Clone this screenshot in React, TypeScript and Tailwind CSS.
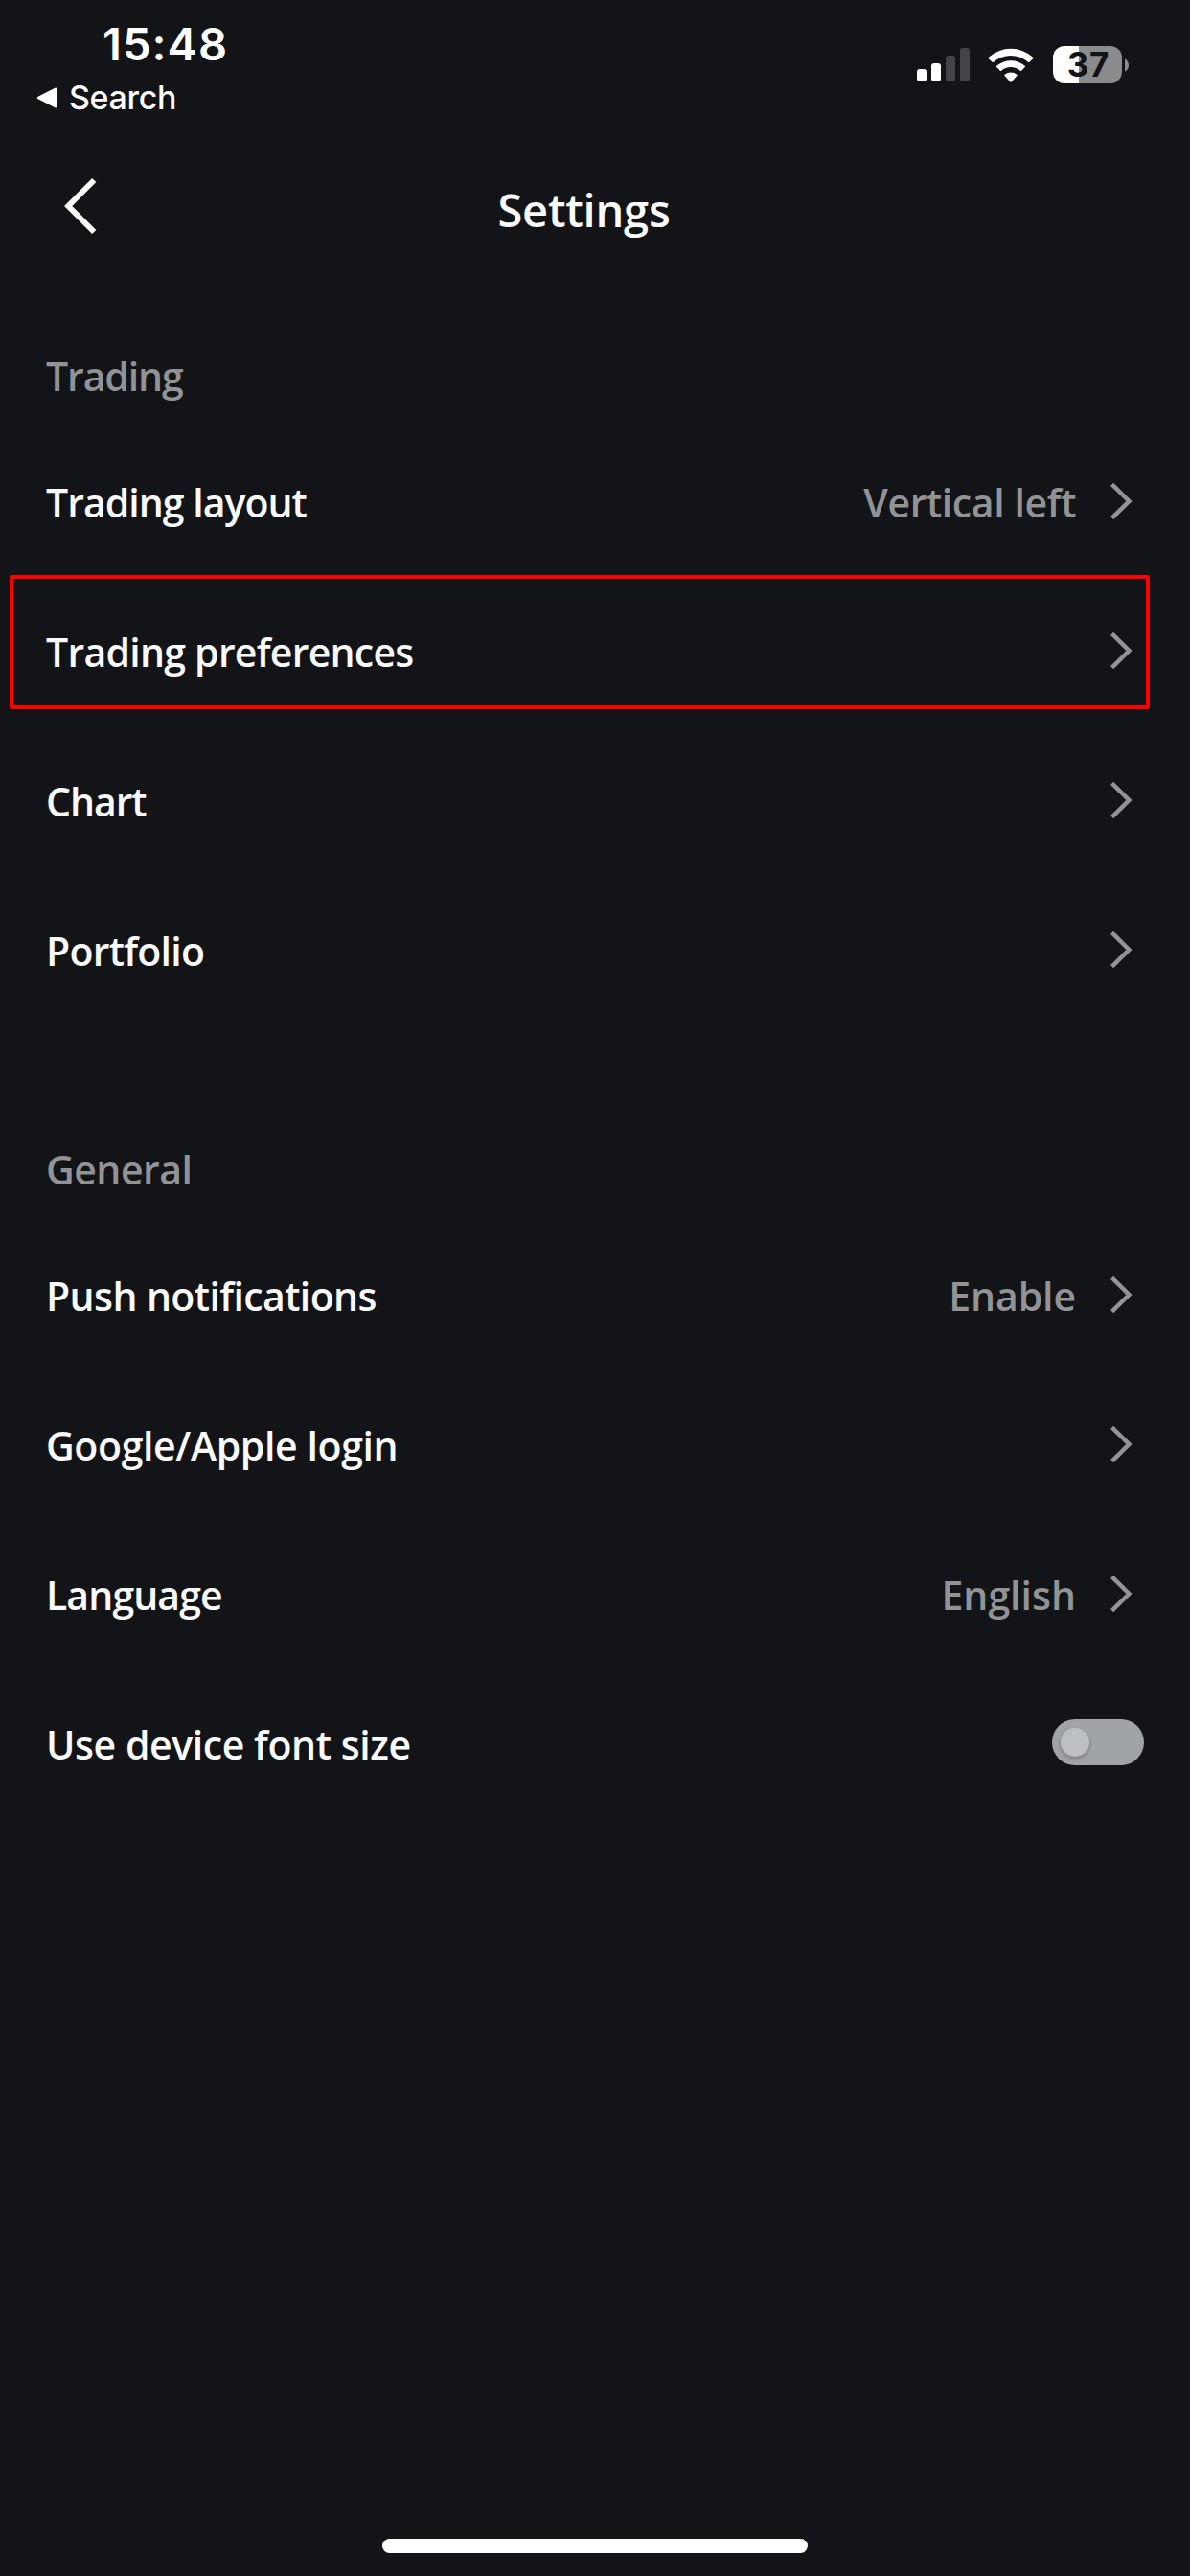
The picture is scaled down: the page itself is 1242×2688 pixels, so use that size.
import type { ReactNode } from "react";

type Item = {
  label: string;
  labelClass: string;
  value?: string;
  valueClass?: string;
  toggle?: boolean;
  highlighted?: boolean;
};

const TRADING: Item[] = [
  { label: "Trading layout", labelClass: "tracking-[-0.98px]", value: "Vertical left", valueClass: "tracking-[-0.4px]" },
  { label: "Trading preferences", labelClass: "tracking-[-0.74px]", highlighted: true },
  { label: "Chart", labelClass: "tracking-[-1.05px]" },
  { label: "Portfolio", labelClass: "tracking-[-0.73px]" },
];

const GENERAL: Item[] = [
  { label: "Push notifications", labelClass: "tracking-[-0.6px]", value: "Enable", valueClass: "tracking-[-0.07px]" },
  { label: "Google/Apple login", labelClass: "tracking-[-0.38px]" },
  { label: "Language", labelClass: "tracking-[-0.91px]", value: "English", valueClass: "tracking-[0px]" },
  { label: "Use device font size", labelClass: "tracking-[-0.43px]", toggle: true },
];

function SignalIcon() {
  return (
    <svg width="56" height="36" viewBox="0 0 56 36" className="shrink-0">
      <rect x="0" y="22" width="10" height="13" rx="3" fill="#fff" />
      <rect x="15" y="16" width="10" height="19" rx="3" fill="#fff" />
      <rect x="30" y="8" width="10" height="27" rx="3" fill="#434447" />
      <rect x="45" y="0" width="10" height="35" rx="3" fill="#434447" />
    </svg>
  );
}

function WifiIcon() {
  return (
    <svg width="50" height="38" viewBox="-25 -37 50 38" fill="#fff" className="shrink-0">
      <path
        d="M-23.2 -25.2A34.6 34.6 0 0 1 23.2 -25.2Q23.9 -24.5 23.2 -23.8L19.4 -20.2Q18.7 -19.6 18 -20.2A27 27 0 0 0 -18 -20.2Q-18.7 -19.6 -19.4 -20.2L-23.2 -23.8Q-23.9 -24.5 -23.2 -25.2Z"
        transform="translate(0 -1)"
      />
      <path d="M-14.8 -17.2A22.4 22.4 0 0 1 14.8 -17.2Q15.4 -16.5 14.8 -15.9L11.2 -12.3Q10.5 -11.7 9.8 -12.3A15 15 0 0 0 -9.8 -12.3Q-10.5 -11.7 -11.2 -12.3L-14.8 -15.9Q-15.4 -16.5 -14.8 -17.2Z" />
      <path d="M-6.4 -8.2A10.4 10.4 0 0 1 6.4 -8.2Q7 -7.6 6.4 -7L0.7 -0.6Q0 0.1 -0.7 -0.6L-6.4 -7Q-7 -7.6 -6.4 -8.2Z" />
    </svg>
  );
}

function Battery() {
  return (
    <div className="flex items-center">
      <div className="flex h-[39px] w-[72px] items-center justify-center rounded-[12px] bg-[linear-gradient(90deg,#ffffff_27px,#8a8b8d_27px)]">
        <span className="pl-[2px] font-['Inter',sans-serif] text-[35px] leading-[39px] font-bold tracking-[0.9px] text-[#131418]">37</span>
      </div>
      <svg width="4" height="14" viewBox="0 0 4 14" className="ml-[3px]">
        <path d="M0 0.4C2.6 1.6 4 4 4 7S2.6 12.4 0 13.6Z" fill="#8a8b8d" />
      </svg>
    </div>
  );
}

function StatusBar() {
  return (
    <div className="flex h-[140px] items-start justify-between pr-16 font-['Inter',sans-serif] text-white">
      <div className="pt-[18px]">
        <div className="pl-[107px] text-[47px] leading-[56px] font-semibold tracking-[1.05px]">15:48</div>
        <div className="mt-[7px] flex items-center pl-[38px]">
          <svg width="22" height="22" viewBox="0 0 22 22">
            <path d="M20 2V20L2.4 11Z" fill="#fff" stroke="#fff" strokeWidth="3" strokeLinejoin="round" />
          </svg>
          <span className="ml-3 text-[34px] leading-[42px] font-medium tracking-[-0.34px]">Search</span>
        </div>
      </div>
      <div className="flex items-center pt-12">
        <div className="mt-px"><SignalIcon /></div>
        <div className="ml-[17px]"><WifiIcon /></div>
        <div className="ml-[19px]"><Battery /></div>
      </div>
    </div>
  );
}

function Chevron() {
  return (
    <svg width="24" height="40" viewBox="0 0 24 40" className="mr-[11px] shrink-0">
      <path d="M1.6 2.3L19.4 20L1.6 37.7" fill="none" stroke="#929395" strokeWidth="4.5" />
    </svg>
  );
}

function Toggle() {
  return (
    <div className="-mt-0.5 flex h-12 w-24 items-center rounded-full bg-[#a1a4a7] pl-[9px]">
      <div className="h-[30px] w-[30px] rounded-full bg-[#bcc0c3] shadow-[0_2px_4px_rgba(0,0,0,0.25)]" />
    </div>
  );
}

function Row({ item }: { item: Item }) {
  return (
    <div className="relative flex h-[156px] items-center justify-between px-12">
      <span className={`mt-[2px] ${item.labelClass}`}>{item.label}</span>
      <div className="flex items-center">
        {item.value && <span className={`mt-[2px] mr-[36px] text-[#929395] ${item.valueClass}`}>{item.value}</span>}
        {item.toggle ? <Toggle /> : <Chevron />}
      </div>
      {item.highlighted && (
        <div className="absolute -top-px left-[10px] h-[140px] w-[1190px] rounded-[2px] border-4 border-[#ff0000]" />
      )}
    </div>
  );
}

function Section({ title, titleClass, children }: { title: string; titleClass: string; children: ReactNode }) {
  return (
    <section>
      <h2 className="flex h-[108px] items-center px-12 text-[#929395]">
        <span className={`mt-[2px] ${titleClass}`}>{title}</span>
      </h2>
      {children}
    </section>
  );
}

export default function App() {
  return (
    <div className="flex h-[2688px] w-[1242px] flex-col overflow-hidden bg-[#131418] font-['Open_Sans',sans-serif] text-[41px] leading-[56px] font-semibold text-[#fafafa]">
      <StatusBar />
      <header className="mb-[39px] flex h-[158px] items-center pr-[124px] pl-[67px]">
        <svg width="34" height="60" viewBox="0 0 34 60" className="-mt-2 shrink-0">
          <path d="M31.2 3L4.2 30L31.2 57" fill="none" stroke="#fafafa" strokeWidth="6" />
        </svg>
        <h1 className="flex-1 text-center text-[47px] leading-[64px] tracking-[-0.23px]">Settings</h1>
      </header>
      <Section title="Trading" titleClass="tracking-[-1.1px]">
        {TRADING.map((item) => (
          <Row key={item.label} item={item} />
        ))}
      </Section>
      <div className="h-24" />
      <Section title="General" titleClass="tracking-[-0.5px]">
        {GENERAL.map((item) => (
          <Row key={item.label} item={item} />
        ))}
      </Section>
      <div className="mx-auto mt-auto mb-6 h-[15px] w-[444px] rounded-full bg-white" />
    </div>
  );
}
